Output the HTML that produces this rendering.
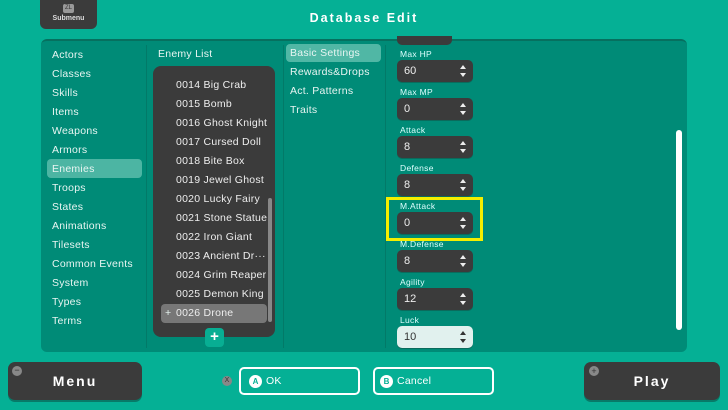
<!DOCTYPE html>
<html><head><meta charset="utf-8"><style>
*{margin:0;padding:0;box-sizing:border-box}
body{width:728px;height:410px;overflow:hidden;background:#05b095;font-family:"Liberation Sans","DejaVu Sans",sans-serif;color:#eef;position:relative}
.a{position:absolute}
.t{color:#e8f5f2;font-size:10.5px;font-weight:normal;letter-spacing:.25px}
.field{position:absolute;left:397px;width:76px;height:22px;background:#3b3b3b;border-radius:5px;box-shadow:0 1px 0 #0a6b5c}
.field span{position:absolute;left:7px;top:5px;font-size:11px;color:#eee}
.field i{position:absolute;right:7px;top:5px;width:0;height:0;border-left:3px solid transparent;border-right:3px solid transparent;border-bottom:4px solid #eee}
.field b{position:absolute;right:7px;top:13px;width:0;height:0;border-left:3px solid transparent;border-right:3px solid transparent;border-top:4px solid #eee}
.lbl{position:absolute;left:400px;font-size:8.5px;color:#dff;letter-spacing:.3px}
.btn{position:absolute;background:#3b3b3b;border-radius:7px;color:#fff;font-weight:bold;font-size:14px;letter-spacing:2px;text-align:center;box-shadow:0 2px 0 #087a68}
.ob{position:absolute;border:2px solid #fff;border-radius:5px;height:28px;top:367px;width:121px}
.circ{position:absolute;width:13px;height:13px;border-radius:50%;background:#fff;color:#05b095;font-size:8px;font-weight:bold;text-align:center;line-height:13px}
</style></head><body>
<div class="a" style="left:40px;top:0;width:57px;height:29px;background:#3b3b3b;border-radius:0 0 6px 6px;text-align:center">
<div style="margin:4px auto 0;width:11px;height:9px;background:#999;border-radius:2px;font-size:6px;color:#333;line-height:9px">ZL</div>
<div style="font-size:7px;color:#ddd;font-weight:bold;margin-top:2px">Submenu</div></div>
<div class="a" style="left:0;width:728px;top:11px;text-align:center;font-size:12.5px;font-weight:bold;letter-spacing:2px;color:#fff">Database Edit</div>

<div class="a" style="left:41px;top:39px;width:646px;height:313px;background:#008b77;border-radius:6px;border-top:2px solid #06705f"></div>
<div class="a" style="left:146px;top:45px;width:1px;height:303px;background:#027a68"></div>
<div class="a" style="left:283px;top:45px;width:1px;height:303px;background:#027a68"></div>
<div class="a" style="left:385px;top:45px;width:1px;height:303px;background:#027a68"></div>

<div class="a" style="left:47px;top:159px;width:95px;height:19px;background:#4cb5a3;border-radius:4px"></div>
<div class="a t" style="left:52px;top:46px;line-height:19px">Actors<br>Classes<br>Skills<br>Items<br>Weapons<br>Armors<br>Enemies<br>Troops<br>States<br>Animations<br>Tilesets<br>Common Events<br>System<br>Types<br>Terms</div>

<div class="a t" style="left:158px;top:48px">Enemy List</div>
<div class="a" style="left:153px;top:66px;width:122px;height:271px;background:#3b3b3b;border-radius:8px"></div>
<div class="a" style="left:161px;top:304px;width:106px;height:19px;background:#777;border-radius:4px"></div>
<div class="a" style="left:268px;top:198px;width:4px;height:124px;background:#888;border-radius:2px"></div>
<div class="a t" style="left:176px;top:76px;line-height:19px;color:#eee">0014 Big Crab<br>0015 Bomb<br>0016 Ghost Knight<br>0017 Cursed Doll<br>0018 Bite Box<br>0019 Jewel Ghost<br>0020 Lucky Fairy<br>0021 Stone Statue<br>0022 Iron Giant<br>0023 Ancient Dr···<br>0024 Grim Reaper<br>0025 Demon King<br>0026 Drone</div>
<div class="a t" style="left:165px;top:304px;line-height:19px">+</div>
<div class="a" style="left:205px;top:328px;width:19px;height:19px;background:#08ae93;border-radius:4px;color:#fff;font-weight:bold;font-size:15px;text-align:center;line-height:18px">+</div>

<div class="a" style="left:286px;top:44px;width:95px;height:18px;background:#50b7a5;border-radius:4px"></div>
<div class="a t" style="left:290px;top:44px;line-height:19px">Basic Settings<br>Rewards&amp;Drops<br>Act. Patterns<br>Traits</div>

<div class="a" style="left:397px;top:36px;width:55px;height:9px;background:#3b3b3b;border-radius:0 0 5px 5px"></div>
<div class="lbl" style="top:49px">Max HP</div><div class="field" style="top:60px"><span>60</span><i></i><b></b></div>
<div class="lbl" style="top:87px">Max MP</div><div class="field" style="top:98px"><span>0</span><i></i><b></b></div>
<div class="lbl" style="top:125px">Attack</div><div class="field" style="top:136px"><span>8</span><i></i><b></b></div>
<div class="lbl" style="top:163px">Defense</div><div class="field" style="top:174px"><span>8</span><i></i><b></b></div>
<div class="lbl" style="top:201px">M.Attack</div><div class="field" style="top:212px"><span>0</span><i></i><b></b></div>
<div class="lbl" style="top:239px">M.Defense</div><div class="field" style="top:250px"><span>8</span><i></i><b></b></div>
<div class="lbl" style="top:277px">Agility</div><div class="field" style="top:288px"><span>12</span><i></i><b></b></div>
<div class="lbl" style="top:315px">Luck</div><div class="field" style="top:326px;background:#e1f1ee"><span style="color:#333">10</span><i style="border-bottom-color:#333"></i><b style="border-top-color:#333"></b></div>
<div class="a" style="left:386px;top:197px;width:97px;height:44px;border:3px solid #f5ee00"></div>
<div class="a" style="left:676px;top:130px;width:6px;height:200px;background:#fff;border-radius:3px"></div>

<div class="btn" style="left:8px;top:362px;width:134px;height:38px;line-height:38px">Menu</div>
<div class="a" style="left:12px;top:366px;width:10px;height:10px;border-radius:50%;background:#888;color:#333;font-size:9px;line-height:9px;text-align:center">−</div>
<div class="btn" style="left:584px;top:362px;width:136px;height:38px;line-height:38px">Play</div>
<div class="a" style="left:589px;top:366px;width:10px;height:10px;border-radius:50%;background:#888;color:#333;font-size:9px;line-height:10px;text-align:center">+</div>
<div class="a" style="left:222px;top:376px;width:10px;height:10px;border-radius:50%;background:#888;color:#333;font-size:7px;line-height:10px;text-align:center">X</div>
<div class="ob" style="left:239px"><div class="circ" style="left:8px;top:6px">A</div><div class="a t" style="left:25px;top:6px;color:#fff">OK</div></div>
<div class="ob" style="left:373px"><div class="circ" style="left:5px;top:6px">B</div><div class="a t" style="left:22px;top:6px;color:#fff">Cancel</div></div>
</body></html>
